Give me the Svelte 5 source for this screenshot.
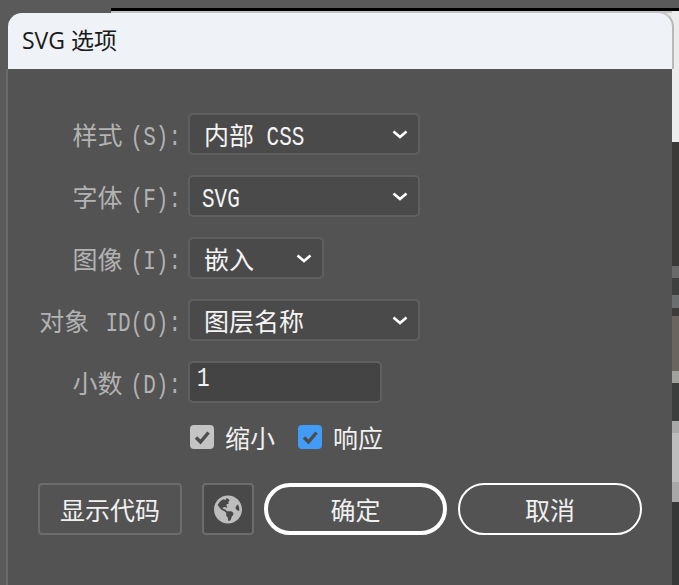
<script>
	const rows = [
		{ label: '样式', code: '(S):', value: '内部', valueCode: ' CSS', size: 'wide' },
		{ label: '字体', code: '(F):', value: '', valueCode: 'SVG', size: 'wide' },
		{ label: '图像', code: '(I):', value: '嵌入', valueCode: '', size: 'small' },
		{ label: '对象', code: 'ID(O):', value: '图层名称', valueCode: '', size: 'wide', far: true }
	]

	// strip of whatever window sits behind the dialog
	const behind = [
		{ h: 131, c: '#ececec' },
		{ h: 124, c: '#3c3a38' },
		{ h: 12, c: '#6a6a6a' },
		{ h: 17, c: '#3e4040' },
		{ h: 13, c: '#6a6e6e' },
		{ h: 8, c: '#3f3b39' },
		{ h: 55, c: '#6b6560' },
		{ h: 12, c: '#a0a09c' },
		{ h: 38, c: '#3c3e3e' },
		{ h: 12, c: '#a8a8a8' },
		{ h: 49, c: '#bdbdbd' },
		{ h: 20, c: '#a8a8a8' },
		{ h: 83, c: '#363838' }
	]
</script>

<div class="desk">
	<div class="topbar"><div class="edge"></div></div>
	<div class="middle">
		<div class="dialog">
			<div class="head">
				<div class="title">SVG 选项</div>
			</div>
			<div class="panel">
				<div class="form">
					{#each rows as row}
						<div class="label">{row.label}<span class="code gap" class:far={row.far}>{row.code}</span></div>
						<div class="select {row.size}" class:tight={!row.value}>
							<span>{row.value}<span class="code">{row.valueCode}</span></span>
							<svg class="chevron" width="16" height="9" viewBox="0 0 16 9">
								<path d="M1.5 1.5 L8 7 L14.5 1.5" fill="none" stroke="#fff" stroke-width="2.6" />
							</svg>
						</div>
					{/each}
					<div class="label">小数<span class="code gap">(D):</span></div>
					<div class="input"><span class="code">1</span></div>
				</div>

				<div class="checks">
					<span class="box grey">
						<svg width="24" height="24" viewBox="0 0 24 24"><path d="M6 12.5 L10.5 17 L18.5 7.5" fill="none" stroke="#4c4c4c" stroke-width="3.4" /></svg>
					</span>
					<span class="check-text">缩小</span>
					<span class="box blue">
						<svg width="24" height="24" viewBox="0 0 24 24"><path d="M6 12.5 L10.5 17 L18.5 7.5" fill="none" stroke="#4c4c4c" stroke-width="3.4" /></svg>
					</span>
					<span class="check-text">响应</span>
				</div>

				<div class="footer">
					<button class="plain">显示代码</button>
					<button class="globe" aria-label="globe">
						<svg width="28" height="29" viewBox="0 0 496 512">
							<path fill="#bdbdbd" d="M248 8C111.03 8 0 119.03 0 256s111.03 248 248 248 248-111.03 248-248S384.97 8 248 8zm82.29 357.6c-3.9 3.88-7.99 7.95-11.31 11.28-2.99 3-5.1 6.7-6.17 10.71-1.51 5.66-2.73 11.38-4.77 16.87l-17.39 46.85c-13.76 3-28 4.69-42.65 4.69v-27.38c1.69-12.62-7.64-36.26-22.63-51.25-6-6-9.37-14.14-9.37-22.63v-32.01c0-11.64-6.27-22.34-16.46-27.97-14.37-7.95-34.81-19.06-48.81-26.11-11.48-5.78-22.1-13.14-31.65-21.75l-.8-.72a114.792 114.792 0 0 1-18.06-20.74c-9.38-13.77-24.66-36.42-34.59-51.14 20.47-45.5 57.36-82.04 103.2-101.89l24.01 12.01C203.48 89.74 216 82.01 216 70.11v-11.3c7.99-1.29 16.12-2.11 24.45-2.45l28.3 28.3c6.25 6.25 6.25 16.38 0 22.63L264 112l-10.34 10.34c-3.12 3.12-3.12 8.19 0 11.31l4.69 4.69c3.12 3.12 3.12 8.19 0 11.31l-8 8a8.008 8.008 0 0 1-5.66 2.34h-8.99c-2.08 0-4.08.81-5.58 2.27l-9.92 9.65a8.008 8.008 0 0 0-1.58 9.31l15.59 31.19c2.66 5.32-1.21 11.58-7.15 11.58h-5.64c-1.93 0-3.79-.7-5.24-1.96l-9.28-8.06a16.017 16.017 0 0 0-15.55-3.1l-31.17 10.39a11.95 11.95 0 0 0-8.17 11.34c0 4.53 2.56 8.66 6.61 10.69l11.08 5.54c9.41 4.71 19.79 7.16 30.31 7.16s22.59 27.29 32 32h66.75c8.49 0 16.62 3.37 22.63 9.37l13.69 13.69a30.503 30.503 0 0 1 8.93 21.57 46.536 46.536 0 0 1-13.72 32.98zM417 274.25c-5.79-1.45-10.84-5-14.15-9.97l-17.98-26.97a23.97 23.97 0 0 1 0-26.62l19.59-29.38c2.32-3.47 5.5-6.29 9.24-8.15l12.98-6.49C440.2 193.59 448 223.87 448 256c0 8.67-.74 17.16-1.82 25.54L417 274.25z" />
						</svg>
					</button>
					<button class="pill primary">确定</button>
					<button class="pill">取消</button>
				</div>
			</div>
		</div>
		<div class="behind">
			{#each behind as part}
				<div style="height: {part.h}px; background: {part.c}"></div>
			{/each}
		</div>
	</div>
</div>

<style>
	:global(body) {
		background: #5a5a5a;
		overflow: hidden;
	}

	.desk {
		width: 679px;
		height: 585px;
		display: flex;
		flex-direction: column;
		background: #5a5a5a;
		font-family: "Noto Sans CJK SC", sans-serif;
		overflow: hidden;
	}

	.topbar {
		height: 11px;
		padding-left: 111px;
		box-sizing: border-box;
	}

	.edge {
		height: 3px;
		margin-top: 8px;
		background: #000;
	}

	.middle {
		display: flex;
		height: 574px;
	}

	.dialog {
		width: 666px;
		margin-left: 6px;
		flex-shrink: 0;
		display: flex;
		flex-direction: column;
		position: relative;
		z-index: 1;
	}

	.head {
		height: 58px;
		padding: 2px 0 0 2px;
		box-sizing: border-box;
		background:
			linear-gradient(to right, #5a5a5a 105px, #c4c4c4 105px) top / 100% 2px no-repeat,
			linear-gradient(to right, #5a5a5a 50%, #e8e8e8 50%);
	}

	.title {
		height: 56px;
		width: 664px;
		box-sizing: border-box;
		padding-left: 14px;
		background: #eff2f7;
		border-radius: 14px 14px 0 0;
		color: #1a1a1a;
		font-family: "Open Sans", "Noto Sans CJK SC", sans-serif;
		font-size: 23px;
		line-height: 54px;
		position: relative;
	}

	/* grey edge that only runs round the right-hand corner */
	.title::after {
		content: "";
		position: absolute;
		top: -2px;
		right: -2px;
		width: 260px;
		height: 58px;
		box-sizing: border-box;
		border-top: 2px solid #c4c4c4;
		border-right: 2px solid #b8b8b8;
		border-top-right-radius: 16px;
	}

	.panel {
		flex: 1;
		box-sizing: border-box;
		background: #535353;
		border-left: 2px solid #6a6a6a;
		padding: 44px 0 0 30px;
	}

	.form {
		display: grid;
		grid-template-columns: 143px auto;
		grid-auto-rows: 42px;
		column-gap: 7px;
		row-gap: 20px;
		justify-items: start;
		align-items: center;
	}

	.label {
		justify-self: end;
		height: 42px;
		color: #b2b2b2;
		font-size: 25px;
		line-height: 42px;
		white-space: nowrap;
	}

	.code {
		display: inline-block;
		font-family: "Liberation Mono", monospace;
		font-size: 21px;
		line-height: 1;
		white-space: pre;
		transform: scaleY(1.3);
		transform-origin: 50% 80%;
	}

	.gap {
		margin-left: 8px;
	}

	.gap.far {
		margin-left: 16px;
	}

	.select,
	.input {
		height: 42px;
		box-sizing: border-box;
		border: 2px solid #5f5f5f;
		border-radius: 5px;
		background: #4a4a4a;
		color: #f4f4f4;
		font-size: 25px;
		line-height: 38px;
		display: flex;
		align-items: center;
		justify-content: space-between;
		padding: 0 10px 0 14px;
		white-space: nowrap;
	}

	.select.tight {
		padding-left: 12px;
	}

	.wide {
		width: 232px;
	}

	.small {
		width: 136px;
	}

	.input {
		width: 194px;
		background: #444;
		padding: 7px 0 0 7px;
		align-items: flex-start;
		line-height: 26px;
	}

	.checks {
		display: flex;
		align-items: center;
		height: 24px;
		margin: 22px 0 0 152px;
	}

	.box {
		width: 24px;
		height: 24px;
		border-radius: 4px;
		display: block;
		flex-shrink: 0;
	}

	.grey {
		background: #c4c4c4;
	}

	.blue {
		background: #429bf5;
		margin-left: 23px;
	}

	.check-text {
		margin-left: 11px;
		color: #f0f0f0;
		font-size: 25px;
		line-height: 24px;
	}

	.footer {
		display: flex;
		margin-top: 34px;
	}

	button {
		height: 52px;
		box-sizing: border-box;
		padding: 0;
		color: #f0f0f0;
		font-family: inherit;
		font-size: 25px;
		background: transparent;
		cursor: pointer;
	}

	.plain {
		width: 144px;
		border: 2px solid #6c6c6c;
		border-radius: 4px;
	}

	.globe {
		width: 52px;
		margin-left: 20px;
		border: 2px solid #6c6c6c;
		border-radius: 4px;
		background: #494949;
		display: flex;
		align-items: center;
		justify-content: center;
	}

	.pill {
		width: 184px;
		margin-left: 11px;
		border: 2px solid #fff;
		border-radius: 26px;
	}

	.primary {
		width: 183px;
		margin-left: 10px;
		border-width: 4px;
	}

	.behind {
		width: 7px;
		flex-shrink: 0;
	}
</style>
